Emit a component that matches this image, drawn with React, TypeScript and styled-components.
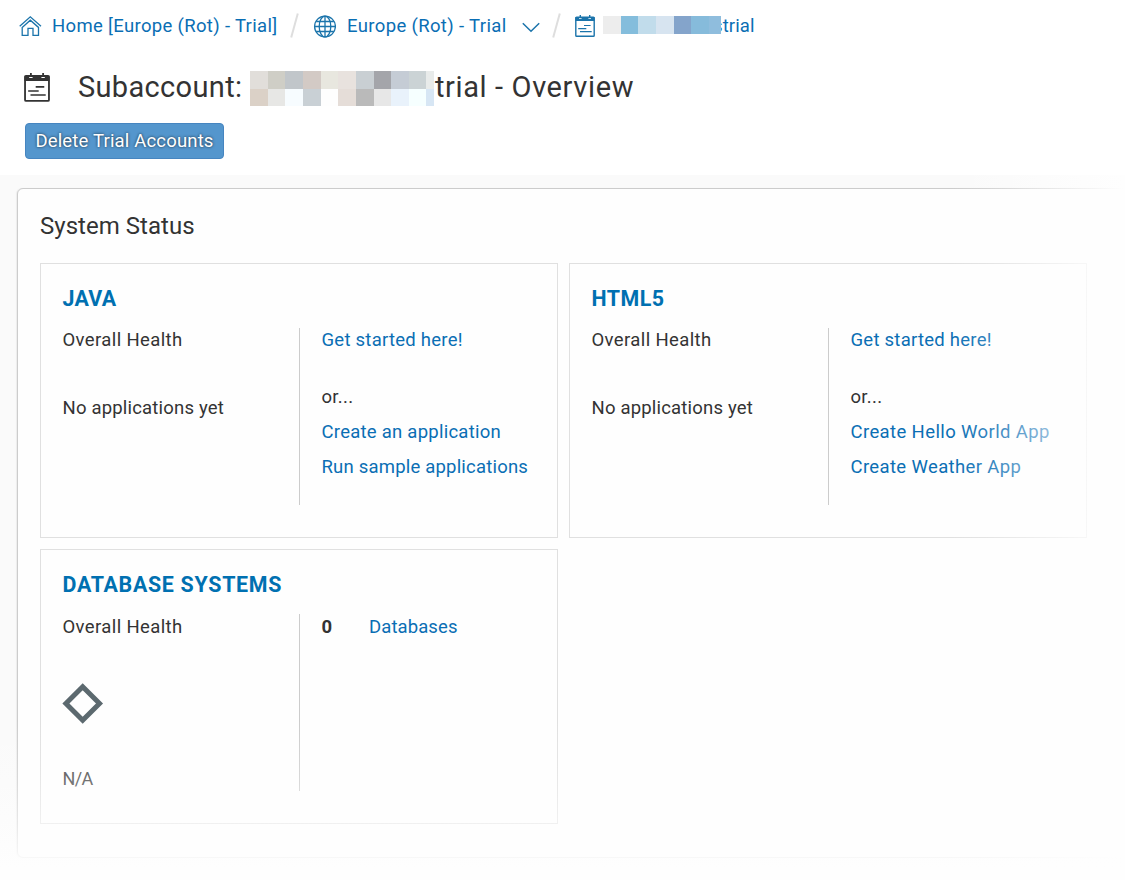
import React from "react";
import styled, { createGlobalStyle } from "styled-components";

const GlobalStyle = createGlobalStyle`
  * { box-sizing: border-box; }
  body {
    margin: 0;
    background: #fff;
    color: #333;
    font-family: Roboto, "Liberation Sans", sans-serif;
    font-size: 18.5px;
    overflow: hidden;
  }
`;

const Page = styled.div`
  position: relative;
  width: 1125px;
  height: 880px;
  overflow: hidden;
`;

const Breadcrumbs = styled.nav`
  display: flex;
  align-items: center;
  height: 52px;
  padding-left: 19px;
`;

const Crumb = styled.a<{ $gap: number; $width: number; $ls: number }>`
  display: flex;
  align-items: center;
  gap: ${(p) => p.$gap}px;
  width: ${(p) => p.$width}px;
  flex: none;
  color: #0a6eb4;
  line-height: 24px;
  white-space: nowrap;
  letter-spacing: ${(p) => p.$ls}px;
  svg { flex: none; }
`;

const Separator = styled.svg`
  flex: none;
  margin: 0 14px 2px 13px;
`;

const Chevron = styled.svg`
  margin: 2px 0 0 0;
`;

const Mosaic = styled.span<{ $cols: string; $rows: string; $shift: number }>`
  display: inline-grid;
  flex: none;
  z-index: 1;
  margin-top: ${(p) => p.$shift}px;
  grid-template-columns: ${(p) => p.$cols};
  grid-template-rows: ${(p) => p.$rows};
`;

const Tile = styled.span<{ $color: string }>`
  background: ${(p) => p.$color};
`;

const AccountName = styled.span`
  margin-left: -8px;
`;

const TitleRow = styled.div`
  display: flex;
  align-items: center;
  height: 70px;
  padding: 1px 0 0 24px;
`;

const Title = styled.h1`
  display: flex;
  align-items: center;
  margin: -2px 0 0 28px;
  font-size: 29px;
  font-weight: 400;
  line-height: 36px;
  white-space: nowrap;
`;

const TextPart = styled.span<{ $width?: number; $ls?: number; $left?: number }>`
  flex: none;
  width: ${(p) => (p.$width ? `${p.$width}px` : "auto")};
  margin-left: ${(p) => p.$left ?? 0}px;
  letter-spacing: ${(p) => (p.$ls !== undefined ? `${p.$ls}px` : "inherit")};
`;

const Actions = styled.div`
  height: 53px;
  padding: 1px 0 0 25px;
`;

const DeleteButton = styled.button`
  width: 199px;
  height: 36px;
  padding: 0;
  border: 1px solid #4685c0;
  border-radius: 4px;
  background: #5496cd;
  color: #fff;
  font: inherit;
  letter-spacing: 0.17px;
  line-height: 32px;
  white-space: nowrap;
  text-shadow: 0 0 3px rgba(0, 0, 0, 0.75);
`;

const Content = styled.main`
  height: 705px;
  padding: 13px 0 0 17px;
  background: #fafafa;
`;

const Panel = styled.section`
  width: 1140px;
  height: 670px;
  padding: 0 0 0 22px;
  border: 1px solid #ccc;
  border-radius: 6px;
  background: #fefefe;
  box-shadow: -1px 0 1px rgba(0, 0, 0, 0.06);
`;

const PanelTitle = styled.h2`
  height: 74px;
  margin: 0;
  padding-top: 22px;
  font-size: 24px;
  font-weight: 400;
  line-height: 30px;
  letter-spacing: 0.03px;
`;

const Cards = styled.div`
  display: grid;
  grid-template-columns: 518px 518px;
  grid-auto-rows: 275px;
  gap: 11px;
`;

const Card = styled.article`
  display: grid;
  grid-template-columns: 236.5px 1fr;
  grid-template-rows: 64px 177px;
  padding-left: 21.5px;
  border: 1px solid #e0e0e0;
`;

const CardTitle = styled.h3<{ $ls: number }>`
  grid-column: 1 / 3;
  margin: 0;
  padding-top: 22px;
  color: #0070b1;
  font-size: 21.4px;
  font-weight: 700;
  line-height: 26px;
  letter-spacing: ${(p) => p.$ls}px;
`;

const Column = styled.div<{ $divided?: boolean }>`
  display: flex;
  flex-direction: column;
  padding-left: ${(p) => (p.$divided ? 21.5 : 0)}px;
  border-left: ${(p) => (p.$divided ? "1px solid #ccc" : "none")};
`;

const Line = styled.div<{ $top?: number; $ls?: number }>`
  display: flex;
  margin-top: ${(p) => p.$top ?? 0}px;
  line-height: 24px;
  white-space: nowrap;
  letter-spacing: ${(p) => p.$ls ?? 0.3}px;
`;

const HealthValue = styled(Line)`
  color: #444;
  font-size: 18px;
`;

const Link = styled.a`
  color: #0a6eb4;
`;

const Count = styled.b`
  width: 47.5px;
`;

const Diamond = styled.svg`
  display: block;
  margin: 44px 0 0 -0.5px;
`;

const FadeRight = styled.div`
  position: absolute;
  top: 175px;
  right: 0;
  width: 175px;
  height: 705px;
  pointer-events: none;
  background: linear-gradient(
    to right,
    rgba(254, 254, 254, 0) 0%,
    rgba(254, 254, 254, 0.18) 25%,
    rgba(254, 254, 254, 0.52) 55%,
    rgba(254, 254, 254, 0.78) 80%,
    #fefefe 99%
  );
`;

const FadeBottom = styled.div`
  position: absolute;
  left: 0;
  bottom: 0;
  width: 100%;
  height: 160px;
  pointer-events: none;
  background: linear-gradient(
    to bottom,
    rgba(254, 254, 254, 0) 0%,
    rgba(254, 254, 254, 0.22) 35%,
    rgba(254, 254, 254, 0.55) 65%,
    rgba(254, 254, 254, 0.85) 85%,
    #fefefe 92%
  );
`;

const HomeIcon = () => (
  <svg width="23" height="22" viewBox="0 0 23 22" fill="none" stroke="#1b74ab" strokeWidth="1.3">
    <path d="M.7 11.2 11.3 1.8 22 11.2" />
    <path d="M3.2 12.4 11.3 5.2 19.5 12.4V20.3H14V13.4H9V20.3H3.2Z" />
  </svg>
);

const GlobeIcon = () => (
  <svg width="23" height="23" viewBox="0 0 23 23" fill="none" stroke="#1b74ab" strokeWidth="1.3">
    <circle cx="12" cy="11.5" r="10.4" />
    <ellipse cx="12" cy="11.5" rx="5.8" ry="10.4" />
    <path d="M12 1V22M3.2 6.5H20.8M1.5 11.5H22.5M3.2 16.5H20.8" />
  </svg>
);

const AccountIcon = ({ w, h, color }: { w: number; h: number; color: string }) => (
  <svg width={w} height={h} viewBox="0 0 20 22" preserveAspectRatio="none">
    <path d="M1.6 2.3H18.4Q19.2 2.3 19.2 3.1V20.4Q19.2 21.2 18.4 21.2H1.6Q.8 21.2 .8 20.4V3.1Q.8 2.3 1.6 2.3Z" fill="none" stroke={color} strokeWidth="1.4" />
    <path d="M.4 2H4V3.8H6.6V2H13.4V3.8H16V2H19.6V6H.4Z" fill={color} />
    <path d="M5.3 0V2.8M14.7 0V2.8" stroke={color} strokeWidth="1.4" />
    <path d="M9 10.5H15.6M3.2 13.6H11.3M5 16.7H16.7" stroke={color} strokeWidth="1.2" />
  </svg>
);

const Slash = () => (
  <Separator width="9" height="25" viewBox="0 0 9 25">
    <path d="M1.2 24.5 7.8 .5" stroke="#dedede" strokeWidth="2" />
  </Separator>
);

const crumbTiles = ["#ededed", "#84bddc", "#c1dceb", "#d7e4f0", "#84a4cb", "#86bbdb", "#8fbddd"];
const titleTiles = [
  "#e1deda", "#cfcec6", "#c1c6ca", "#d3cac5", "#e8e7df", "#e8e2de", "#c9cfd3", "#a4a5aa", "#c5ccd5", "#cbd3d5", "#e8ebea",
  "#dbd1c7", "#e7e7e5", "#f7fcff", "#c9d0d5", "#fefefe", "#e5ddd8", "#bababa", "#e7e7e7", "#e9f2fb", "#f6ffff", "#d7e6f4",
];

export default function App() {
  return (
    <>
      <GlobalStyle />
      <Page>
        <Breadcrumbs>
          <Crumb $gap={10} $width={258} $ls={0.33}>
            <HomeIcon />
            Home [Europe (Rot) - Trial]
          </Crumb>
          <Slash />
          <Crumb $gap={10} $width={226} $ls={0.36}>
            <GlobeIcon />
            <TextPart $left={1} $width={165}>Europe (Rot) - Trial</TextPart>
            <Chevron width="18" height="11" viewBox="0 0 18 11" fill="none" stroke="#1b74ab" strokeWidth="1.5">
              <path d="M.8 1.2 9 9.3 17.2 1.2" />
            </Chevron>
          </Crumb>
          <Slash />
          <Crumb $gap={0} $width={190} $ls={0.1}>
            <AccountIcon w={20} h={22} color="#1b74ab" />
            <TextPart $width={8} />
            <Mosaic $cols="18px 17px 18px 18px 17px 18px 12px" $rows="18px" $shift={-2}>
              {crumbTiles.map((c, i) => <Tile key={i} $color={c} />)}
            </Mosaic>
            <AccountName>strial</AccountName>
          </Crumb>
        </Breadcrumbs>
        <TitleRow>
          <AccountIcon w={26} h={29} color="#333" />
          <Title>
            <TextPart $width={172} $ls={0.33}>Subaccount:</TextPart>
            <Mosaic $cols="18px 17px 18px 18px 17px 18px 18px 17px 18px 17px 8px" $rows="18px 17px" $shift={3}>
              {titleTiles.map((c, i) => <Tile key={i} $color={c} />)}
            </Mosaic>
            <TextPart $left={1} $ls={0.62}>trial - Overview</TextPart>
          </Title>
        </TitleRow>
        <Actions>
          <DeleteButton>Delete Trial Accounts</DeleteButton>
        </Actions>
        <Content>
          <Panel>
            <PanelTitle>System Status</PanelTitle>
            <Cards>
              <Card>
                <CardTitle $ls={0.25}>JAVA</CardTitle>
                <Column>
                  <Line $ls={0.38}>Overall Health</Line>
                  <Line $top={44} $ls={0.19}>No applications yet</Line>
                </Column>
                <Column $divided>
                  <Line $ls={0.25}><Link>Get started here!</Link></Line>
                  <Line $top={33}>or...</Line>
                  <Line $top={11} $ls={0.25}><Link>Create an application</Link></Line>
                  <Line $top={11} $ls={0.2}><Link>Run sample applications</Link></Line>
                </Column>
              </Card>
              <Card>
                <CardTitle $ls={0.5}>HTML5</CardTitle>
                <Column>
                  <Line $ls={0.38}>Overall Health</Line>
                  <Line $top={44} $ls={0.19}>No applications yet</Line>
                </Column>
                <Column $divided>
                  <Line $ls={0.25}><Link>Get started here!</Link></Line>
                  <Line $top={33}>or...</Line>
                  <Line $top={11} $ls={0.38}><Link>Create Hello World App</Link></Line>
                  <Line $top={11} $ls={0.36}><Link>Create Weather App</Link></Line>
                </Column>
              </Card>
              <Card>
                <CardTitle $ls={0.7}>DATABASE SYSTEMS</CardTitle>
                <Column>
                  <Line $top={1} $ls={0.38}>Overall Health</Line>
                  <Diamond width="42" height="41" viewBox="0 0 42 41">
                    <path d="M20.7 3.7 37.5 20.5 20.7 37.3 3.9 20.5Z" fill="none" stroke="#5c696f" strokeWidth="5" />
                  </Diamond>
                  <HealthValue $top={43} $ls={-0.6}>N/A</HealthValue>
                </Column>
                <Column $divided>
                  <Line $top={1} $ls={0.1}><Count>0</Count><Link>Databases</Link></Line>
                </Column>
              </Card>
            </Cards>
          </Panel>
        </Content>
        <FadeRight />
        <FadeBottom />
      </Page>
    </>
  );
}
